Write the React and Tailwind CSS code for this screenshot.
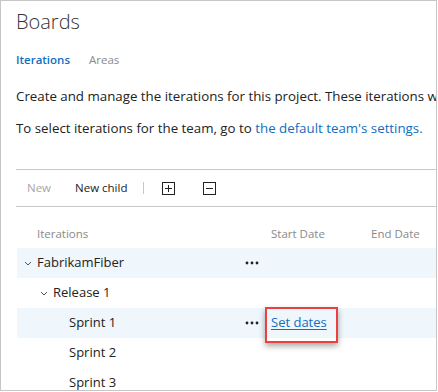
import React from 'react';

const font = { fontFamily: '"Open Sans", "Noto Sans", sans-serif' };

const Chevron = () => (
  <svg width="8" height="5" viewBox="0 0 8 5" className="shrink-0">
    <path d="M1 1 L4 4 L7 1" fill="none" stroke="#555" strokeWidth="1" />
  </svg>
);

const Dots = () => (
  <svg width="14" height="4" viewBox="0 0 14 4">
    <circle cx="2" cy="2" r="1.4" fill="#222" />
    <circle cx="7" cy="2" r="1.4" fill="#222" />
    <circle cx="12" cy="2" r="1.4" fill="#222" />
  </svg>
);

const BoxIcon = ({ plus }) => (
  <svg width="13" height="13" viewBox="0 0 13 13">
    <rect x="0.5" y="0.5" width="12" height="12" fill="none" stroke="#222" />
    <path d="M3 6.5 H10" stroke="#222" />
    {plus && <path d="M6.5 3 V10" stroke="#222" />}
  </svg>
);

const rows = [
  { name: 'FabrikamFiber', level: 0, chevron: true, dots: true, hi: true },
  { name: 'Release 1', level: 1, chevron: true },
  { name: 'Sprint 1', level: 2, dots: true, hi: true, setDates: true },
  { name: 'Sprint 2', level: 2 },
  { name: 'Sprint 3', level: 2 },
];

const indentCls = ['pl-[7px]', 'pl-[23px]', 'pl-[52px]'];

export default function App() {
  return (
    <div className="w-[438px] h-[392px] bg-white overflow-hidden" style={font}>
      <div className="w-[437px] h-[391px] border border-[#c6c6c6] overflow-hidden">
        <div className="pl-[15px] pt-[6px] h-[30px] text-[20px] leading-[30px] font-light text-[#333]">Boards</div>

        <div className="flex items-center gap-[19px] pl-[15px] mt-[19px] h-[20px] text-[11.5px]">
          <span className="font-semibold text-[#106ebe]">Iterations</span>
          <span className="text-[#8a8a8a]">Areas</span>
        </div>

        <div className="pl-[15px] mt-[16px] h-[20px] leading-[20px] text-[13.3px] text-[#222] whitespace-nowrap">
          Create and manage the iterations for this project. These iterations will be available to all teams.
        </div>
        <div className="pl-[15px] mt-[12px] h-[20px] leading-[20px] text-[13.3px] text-[#222] whitespace-nowrap">
          To select iterations for the team, go to <span className="text-[#106ebe]">the default team's settings.</span>
        </div>

        <div className="ml-[15px] mt-[31px] border-t border-[#c8c8c8]" />
        <div className="ml-[15px] flex items-center h-[36px] text-[11.5px]">
          <span className="pl-[11px] text-[#a6a6a6]">New</span>
          <span className="pl-[24px] text-[#222]">New child</span>
          <span className="ml-[16px] w-px h-[12px] bg-[#c8c8c8]" />
          <span className="ml-[18px] flex"><BoxIcon plus /></span>
          <span className="ml-[28px] flex"><BoxIcon /></span>
        </div>
        <div className="ml-[15px] border-t border-[#c8c8c8]" />

        <div className="ml-[16px] flex items-end h-[41px] pb-[6px] text-[11.5px] text-[#8a8a8a]">
          <span className="w-[248px] pl-[20px]">Iterations</span>
          <span className="w-[100px] pl-[6px]">Start Date</span>
          <span className="pl-[6px]">End Date</span>
        </div>

        {rows.map((r) => (
          <div key={r.name} className={`ml-[16px] flex items-center h-[30px] text-[13px] text-[#222] ${r.hi ? 'bg-[#eff6fc]' : ''}`}>
            <div className={`w-[248px] flex items-center ${indentCls[r.level]}`}>
              {r.chevron && <Chevron />}
              <span className={r.chevron ? 'ml-[5px]' : ''}>{r.name}</span>
              {r.dots && <span className="ml-auto mr-[6px] flex"><Dots /></span>}
            </div>
            {r.setDates && (
              <div className="relative pl-[6px]">
                <span className="text-[#106ebe] underline underline-offset-2">Set dates</span>
                <span className="absolute left-[0px] top-[-6px] w-[73px] h-[36px] border-2 border-[#e8413f] shadow-[0_3px_6px_rgba(0,0,0,0.35)]" />
              </div>
            )}
          </div>
        ))}
      </div>
    </div>
  );
}
